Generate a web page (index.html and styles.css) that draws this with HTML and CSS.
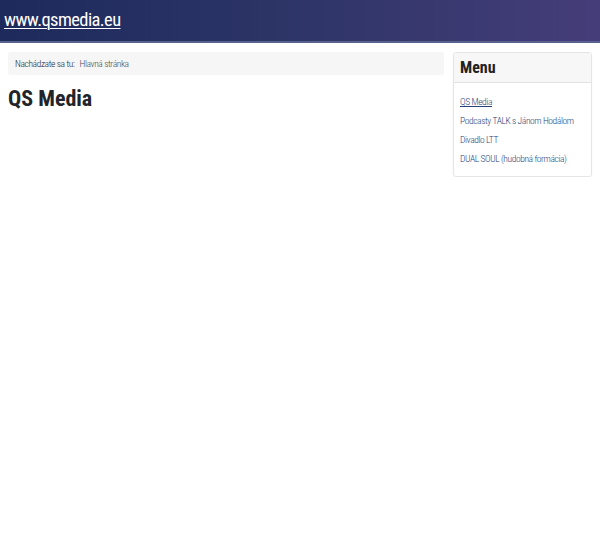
FILE: index.html
```html
<!DOCTYPE html>
<html lang="sk">
<head>
<meta charset="utf-8">
<title>QS Media</title>
<link rel="stylesheet" href="styles.css">
</head>
<body>
<header class="site-header">
  <a class="site-title" href="#">www.qsmedia.eu</a>
</header>
<div class="layout">
  <main class="main">
    <div class="breadcrumb">
      <span class="bc-label">Nachádzate sa tu:</span>
      <span class="bc-current">Hlavná stránka</span>
    </div>
    <h1 class="page-title">QS Media</h1>
  </main>
  <aside class="sidebar">
    <div class="card">
      <h3 class="card-title">Menu</h3>
      <ul class="menu">
        <li><a class="active" href="#">QS Media</a></li>
        <li><a href="#">Podcasty TALK s Jánom Hodálom</a></li>
        <li><a href="#">Divadlo LTT</a></li>
        <li><a href="#">DUAL SOUL (hudobná formácia)</a></li>
      </ul>
    </div>
  </aside>
</div>
</body>
</html>
```

FILE: styles.css
```css
* { box-sizing: border-box; }
html, body { margin: 0; padding: 0; background: #fff; }
body {
  font-family: "Roboto Condensed", "Liberation Sans", sans-serif;
  color: #212529;
}
.site-header {
  height: 43px;
  background: linear-gradient(90deg, #1e2a5c 0%, #2c3466 45%, #453d79 100%);
  border-bottom: 2px solid #58628f;
  padding: 9px 4px 0;
}
.site-title {
  color: #fff;
  font-size: 18.5px;
  font-weight: 400;
  letter-spacing: -0.6px;
  text-decoration: underline;
  text-decoration-thickness: 1px;
  text-underline-offset: 2px;
}
.layout {
  display: flex;
  gap: 9px;
  padding: 9px 8px 0 8px;
}
.main { flex: 0 0 436px; min-width: 0; }
.breadcrumb {
  background: #f6f6f6;
  border-radius: 3px;
  height: 23px;
  padding: 0 7px;
  display: flex;
  align-items: center;
  gap: 5px;
  font-size: 9.5px;
  font-weight: 300;
  letter-spacing: -0.4px;
}
.bc-label { color: #1e1e1e; }
.bc-current { color: #4a4a4a; }
.page-title {
  margin: 11px 0 0;
  font-size: 22px;
  font-weight: bold;
  color: #212529;
}
.sidebar { flex: 0 0 139px; min-width: 0; }
.card {
  border: 1px solid #e5e5e5;
  border-radius: 3px;
  box-shadow: 0 1px 2px rgba(0,0,0,0.05);
}
.card-title {
  margin: 0;
  height: 30px;
  background: #f7f7f7;
  border-bottom: 1px solid #e2e2e2;
  padding: 5px 6px 0;
  font-size: 16px;
  font-weight: bold;
  color: #222;
}
.menu {
  list-style: none;
  margin: 0;
  padding: 9px 6px 8px;
  font-size: 9.5px;
  font-weight: 300;
  letter-spacing: -0.4px;
}
.menu li { height: 19px; line-height: 19px; white-space: nowrap; }
.menu a { color: #273f7a; text-decoration: none; }
.menu a.active { text-decoration: underline; }
```
